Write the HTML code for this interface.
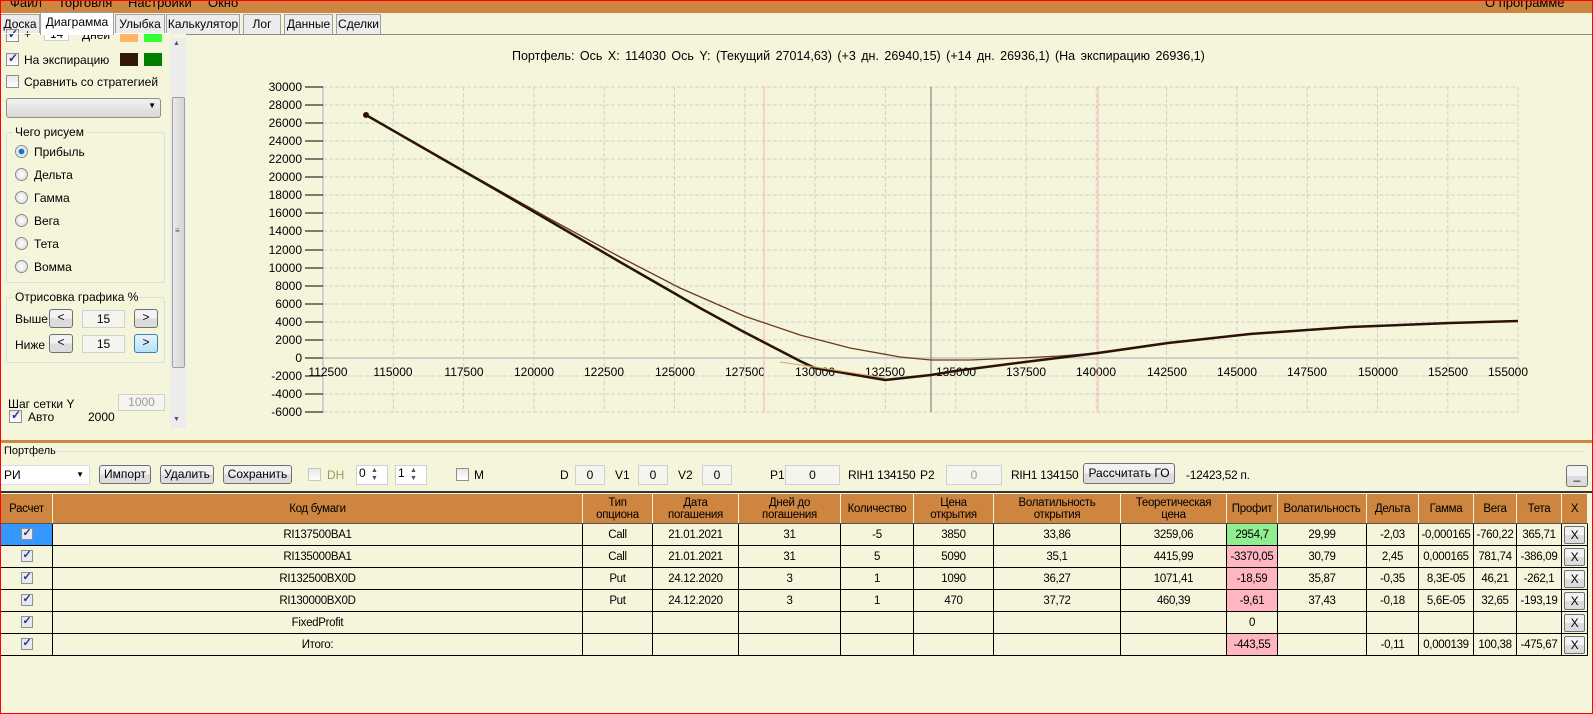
<!DOCTYPE html>
<html><head><meta charset="utf-8">
<style>
*{box-sizing:border-box;margin:0;padding:0}
body{width:1593px;height:714px;overflow:hidden;background:#f5f5dc;font-family:"Liberation Sans",sans-serif;font-size:12px;color:#000;position:relative}
.a{position:absolute;white-space:nowrap}
.menu{left:0;top:0;width:1593px;height:13px;background:#cd853f;overflow:hidden}
.menu span{position:absolute;top:-5px;font-size:13px}
.tab{position:absolute;top:14px;height:20px;background:#ececec;border:1px solid #a0a0a0;border-bottom:none;font-size:12px;line-height:19px;text-align:center}
.cb{position:absolute;width:13px;height:13px;border:1px solid #8e8f8f;background:linear-gradient(#e8e8e8,#fff)}
.cb.c::after{content:"✓";position:absolute;left:1px;top:-3px;font-size:12px;color:#21348c;font-weight:bold}
.rad{position:absolute;width:13px;height:13px;border-radius:50%;border:1px solid #8a8a8a;background:radial-gradient(#fff,#d8d8d8)}
.btn{position:absolute;border:1px solid #707070;border-radius:3px;background:linear-gradient(#f2f2f2 50%,#dcdcdc 50%);text-align:center;font-size:12px}
.box{position:absolute;background:#f5f5f0;border:1px solid #d0d0d0;text-align:center}
.grp{position:absolute;border:1px solid #d5dfe5;border-radius:3px}
.grp span{position:absolute;top:-8px;left:6px;background:#f5f5dc;padding:0 2px}
table{position:absolute;left:0;top:493px;border-collapse:collapse;table-layout:fixed;font-size:11.5px;letter-spacing:-0.3px}
td{border:1px solid #000;height:22px;text-align:center;padding:0;overflow:hidden;white-space:nowrap}
tr.h td{background:#cd853f;height:30px;line-height:12px;border-color:#f5f5dc #f5f5dc #555 #f5f5dc}
.x{display:inline-block;width:21px;height:18px;border:1px solid #707070;border-radius:2px;background:linear-gradient(#f2f2f2 50%,#dcdcdc 50%);line-height:16px;font-size:12px}
.g{background:#90ee90}.p{background:#ffb6c1}
.ck{display:inline-block;width:12px;height:12px;border:1px solid #8e8f8f;background:#e8e8f0;position:relative;vertical-align:middle}
.ck::after{content:"✓";position:absolute;left:1px;top:-3px;font-size:11px;color:#21348c;font-weight:bold}
</style></head><body>
<div class="a menu"><span style="left:10px">Файл</span><span style="left:58px">Торговля</span><span style="left:128px">Настройки</span><span style="left:208px">Окно</span><span style="left:1485px">О программе</span></div>
<div class="a" style="left:0;top:0;width:1593px;height:714px;border:1px solid #f00;pointer-events:none;z-index:9"></div>
<div class="tab" style="left:0;width:40px">Доска</div>
<div class="tab" style="left:40px;width:74px;top:12px;height:23px;background:#fff;z-index:2">Диаграмма</div>
<div class="tab" style="left:115px;width:50px">Улыбка</div>
<div class="tab" style="left:166px;width:74px">Калькулятор</div>
<div class="tab" style="left:243px;width:38px">Лог</div>
<div class="tab" style="left:284px;width:49px">Данные</div>
<div class="tab" style="left:336px;width:45px">Сделки</div>
<div class="a" style="left:186px;top:34px;width:1406px;height:1px;background:#8c8c8c"></div>

<div class="cb c" style="left:6px;top:29px"></div><div class="a" style="left:24px;top:27px">+</div>
<div class="box" style="left:44px;top:27px;width:25px;height:14px;background:#fff;line-height:12px">14</div>
<div class="a" style="left:82px;top:28px">Дней</div>
<div class="a" style="left:120px;top:34px;width:18px;height:8px;background:#ffb366"></div>
<div class="a" style="left:144px;top:34px;width:18px;height:8px;background:#33ff33"></div>
<div class="a" style="left:0;top:33px;width:170px;height:1px;background:#fff"></div>
<div class="cb c" style="left:6px;top:53px"></div><div class="a" style="left:24px;top:53px">На экспирацию</div>
<div class="a" style="left:120px;top:53px;width:18px;height:13px;background:#331a08"></div>
<div class="a" style="left:144px;top:53px;width:18px;height:13px;background:#008000"></div>
<div class="cb" style="left:6px;top:75px"></div><div class="a" style="left:24px;top:75px">Сравнить со стратегией</div>
<div class="a" style="left:6px;top:98px;width:155px;height:20px;border:1px solid #8e8e8e;border-radius:3px;background:linear-gradient(#f2f2f2,#d8d8d8)"><span style="position:absolute;right:4px;top:2px;font-size:8px">▼</span></div>
<div class="grp" style="left:6px;top:132px;width:159px;height:151px"><span>Чего рисуем</span></div>
<div class="rad" style="left:15px;top:145px;background:radial-gradient(#1a6fb5 30%,#cfe4f5 40%,#fff)"></div><div class="a" style="left:34px;top:145px">Прибыль</div>
<div class="rad" style="left:15px;top:168px"></div><div class="a" style="left:34px;top:168px">Дельта</div>
<div class="rad" style="left:15px;top:191px"></div><div class="a" style="left:34px;top:191px">Гамма</div>
<div class="rad" style="left:15px;top:214px"></div><div class="a" style="left:34px;top:214px">Вега</div>
<div class="rad" style="left:15px;top:237px"></div><div class="a" style="left:34px;top:237px">Тета</div>
<div class="rad" style="left:15px;top:260px"></div><div class="a" style="left:34px;top:260px">Вомма</div>
<div class="grp" style="left:6px;top:297px;width:159px;height:66px"><span>Отрисовка графика %</span></div>
<div class="a" style="left:15px;top:312px">Выше</div>
<div class="btn" style="left:49px;top:309px;width:24px;height:19px">&lt;</div>
<div class="box" style="left:82px;top:310px;width:43px;height:18px;line-height:16px">15</div>
<div class="btn" style="left:134px;top:309px;width:24px;height:19px">&gt;</div>
<div class="a" style="left:15px;top:338px">Ниже</div>
<div class="btn" style="left:49px;top:334px;width:24px;height:19px">&lt;</div>
<div class="box" style="left:82px;top:335px;width:43px;height:18px;line-height:16px">15</div>
<div class="btn" style="left:134px;top:334px;width:24px;height:19px;border-color:#3c7fb1;background:linear-gradient(#e5f4fc,#b6e0f7)">&gt;</div>
<div class="a" style="left:8px;top:397px">Шаг сетки Y</div>
<div class="box" style="left:118px;top:394px;width:47px;height:17px;color:#999;line-height:15px">1000</div>
<div class="cb c" style="left:9px;top:410px"></div><div class="a" style="left:28px;top:410px">Авто</div>
<div class="a" style="left:88px;top:410px">2000</div>
<div class="a" style="left:170px;top:38px;width:16px;height:390px;background:#ececec"></div>
<div class="a" style="left:173px;top:40px;font-size:7px;color:#555">▲</div>
<div class="a" style="left:172px;top:97px;width:13px;height:271px;border:1px solid #a0a0a0;border-radius:2px;background:linear-gradient(90deg,#e8e8e8,#d6d6d6)"></div>
<div class="a" style="left:175px;top:226px;font-size:8px;color:#555">≡</div>
<div class="a" style="left:173px;top:416px;font-size:7px;color:#555">▼</div>

<div class="a" style="left:512px;top:49px;font-size:12.5px;word-spacing:2px">Портфель: Ось X: 114030 Ось Y:  (Текущий 27014,63)  (+3 дн. 26940,15)  (+14 дн. 26936,1)  (На экспирацию 26936,1)</div>

<svg class="a" style="left:0;top:0" width="1593" height="440" font-family="Liberation Sans" font-size="12">
<g stroke="#cfcfcf" stroke-dasharray="4,2" stroke-width="1">
<path d="M393.3 87V412M463.6 87V412M533.9 87V412M604.2 87V412M674.5 87V412M744.8 87V412M815.1 87V412M885.4 87V412M955.7 87V412M1026 87V412M1096.3 87V412M1166.6 87V412M1236.9 87V412M1307.2 87V412M1377.5 87V412M1447.8 87V412M1518 87V412"/>
<path d="M323 87H1518M323 105H1518M323 123H1518M323 141H1518M323 159H1518M323 177H1518M323 195H1518M323 213H1518M323 231H1518M323 250H1518M323 268H1518M323 286H1518M323 304H1518M323 322H1518M323 340H1518M323 376H1518M323 394H1518M323 412H1518"/>
</g>
<path d="M323 87V412M323 358H1518" stroke="#d0d0d0" stroke-width="2"/>
<g stroke="#000"><path d="M305 87H323M305 105H323M305 123H323M305 141H323M305 159H323M305 177H323M305 195H323M305 213H323M305 231H323M305 250H323M305 268H323M305 286H323M305 304H323M305 322H323M305 340H323M305 358H323M305 376H323M305 394H323M305 412H323"/></g>
<g text-anchor="end">
<text x="302" y="91">30000</text><text x="302" y="109">28000</text><text x="302" y="127">26000</text><text x="302" y="145">24000</text><text x="302" y="163">22000</text><text x="302" y="181">20000</text><text x="302" y="199">18000</text><text x="302" y="217">16000</text><text x="302" y="235">14000</text><text x="302" y="254">12000</text><text x="302" y="272">10000</text><text x="302" y="290">8000</text><text x="302" y="308">6000</text><text x="302" y="326">4000</text><text x="302" y="344">2000</text><text x="302" y="362">0</text><text x="302" y="380">-2000</text><text x="302" y="398">-4000</text><text x="302" y="416">-6000</text>
</g>
<g text-anchor="middle">
<text x="328" y="376">112500</text><text x="393" y="376">115000</text><text x="464" y="376">117500</text><text x="534" y="376">120000</text><text x="604" y="376">122500</text><text x="675" y="376">125000</text><text x="745" y="376">127500</text><text x="815" y="376">130000</text><text x="885" y="376">132500</text><text x="956" y="376">135000</text><text x="1026" y="376">137500</text><text x="1096" y="376">140000</text><text x="1167" y="376">142500</text><text x="1237" y="376">145000</text><text x="1307" y="376">147500</text><text x="1378" y="376">150000</text><text x="1448" y="376">152500</text><text x="1508" y="376">155000</text>
</g>
<path d="M764 87V412M1098 87V412" stroke="#ffb0b8" stroke-width="1"/>
<path d="M931 87V412" stroke="#707070" stroke-width="1"/>
<path d="M366 115L450 163L550 219L620 257L680 288L744 316L800 335L850 348L900 357L931 360L970 360L1020 358L1060 356L1098 353" fill="none" stroke="#6b3a1f" stroke-width="1.3"/>
<path d="M366 115L500 192L620 262L700 308L744 332L800 361L815 368L885 380L931 375L955 371L1025 362L1098 353L1168 343L1250 334L1350 327L1450 323L1518 321" fill="none" stroke="#2a1408" stroke-width="2.5"/>
<path d="M780 362L815 367L885 378" fill="none" stroke="#d9a06a" stroke-width="1"/>
<circle cx="366" cy="115" r="3" fill="#2a1408"/>
</svg>

<div class="a" style="left:0;top:440px;width:1593px;height:3px;background:#cd853f"></div>
<div class="a" style="left:4px;top:445px;font-size:11px">Портфель</div>
<div class="a" style="left:55px;top:451px;width:1530px;height:1px;background:#e0e0e0"></div>
<div class="a" style="left:0;top:465px;width:90px;height:20px;background:#fff;border:1px solid #ddd;padding:2px 3px">РИ<span style="position:absolute;right:5px;top:4px;font-size:8px">▼</span></div>
<div class="btn" style="left:99px;top:465px;width:52px;height:19px;line-height:17px">Импорт</div>
<div class="btn" style="left:160px;top:465px;width:54px;height:19px;line-height:17px">Удалить</div>
<div class="btn" style="left:223px;top:465px;width:69px;height:19px;line-height:17px">Сохранить</div>
<div class="cb" style="left:308px;top:468px;border-color:#c8c8c8"></div><div class="a" style="left:327px;top:468px;color:#9a9a5a">DH</div>
<div class="box" style="left:356px;top:465px;width:32px;height:20px;background:#fff;text-align:left;padding-left:2px">0</div>
<div class="box" style="left:395px;top:465px;width:32px;height:20px;background:#fff;text-align:left;padding-left:2px">1</div>
<div class="a" style="left:371px;top:467px;font-size:7px;color:#456;line-height:8px">▲<br>▼</div>
<div class="a" style="left:410px;top:467px;font-size:7px;color:#456;line-height:8px">▲<br>▼</div>
<div class="cb" style="left:456px;top:468px"></div><div class="a" style="left:474px;top:468px">M</div>
<div class="a" style="left:560px;top:468px">D</div><div class="box" style="left:575px;top:465px;width:30px;height:20px;line-height:18px">0</div>
<div class="a" style="left:615px;top:468px">V1</div><div class="box" style="left:638px;top:465px;width:30px;height:20px;line-height:18px">0</div>
<div class="a" style="left:678px;top:468px">V2</div><div class="box" style="left:702px;top:465px;width:30px;height:20px;line-height:18px">0</div>
<div class="a" style="left:770px;top:468px">P1</div><div class="box" style="left:785px;top:465px;width:55px;height:20px;line-height:18px">0</div>
<div class="a" style="left:848px;top:468px;letter-spacing:-0.3px">RIH1 134150</div>
<div class="a" style="left:920px;top:468px">P2</div><div class="box" style="left:946px;top:465px;width:56px;height:20px;line-height:18px;color:#999">0</div>
<div class="a" style="left:1011px;top:468px;letter-spacing:-0.3px">RIH1 134150</div>
<div class="btn" style="left:1083px;top:463px;width:92px;height:21px;line-height:18px">Рассчитать ГО</div>
<div class="a" style="left:1186px;top:468px;letter-spacing:-0.3px">-12423,52 п.</div>
<div class="btn" style="left:1566px;top:465px;width:22px;height:22px;line-height:18px">_</div>
<div class="a" style="left:0;top:491px;width:1593px;height:2px;background:#333"></div>

<table>
<colgroup><col style="width:52px"><col style="width:530px"><col style="width:70px"><col style="width:86px"><col style="width:102px"><col style="width:73px"><col style="width:80px"><col style="width:127px"><col style="width:106px"><col style="width:51px"><col style="width:89px"><col style="width:52px"><col style="width:55px"><col style="width:43px"><col style="width:45px"><col style="width:26px"></colgroup>
<tr class="h"><td>Расчет</td><td>Код бумаги</td><td>Тип<br>опциона</td><td>Дата<br>погашения</td><td>Дней до<br>погашения</td><td>Количество</td><td>Цена<br>открытия</td><td>Волатильность<br>открытия</td><td>Теоретическая<br>цена</td><td>Профит</td><td>Волатильность</td><td>Дельта</td><td>Гамма</td><td>Вега</td><td>Тета</td><td>X</td></tr>
<tr><td style="background:#3399ff"><span class="ck"></span></td><td>RI137500BA1</td><td>Call</td><td>21.01.2021</td><td>31</td><td>-5</td><td>3850</td><td>33,86</td><td>3259,06</td><td class="g">2954,7</td><td>29,99</td><td>-2,03</td><td>-0,000165</td><td>-760,22</td><td>365,71</td><td><span class="x">X</span></td></tr>
<tr><td><span class="ck"></span></td><td>RI135000BA1</td><td>Call</td><td>21.01.2021</td><td>31</td><td>5</td><td>5090</td><td>35,1</td><td>4415,99</td><td class="p">-3370,05</td><td>30,79</td><td>2,45</td><td>0,000165</td><td>781,74</td><td>-386,09</td><td><span class="x">X</span></td></tr>
<tr><td><span class="ck"></span></td><td>RI132500BX0D</td><td>Put</td><td>24.12.2020</td><td>3</td><td>1</td><td>1090</td><td>36,27</td><td>1071,41</td><td class="p">-18,59</td><td>35,87</td><td>-0,35</td><td>8,3E-05</td><td>46,21</td><td>-262,1</td><td><span class="x">X</span></td></tr>
<tr><td><span class="ck"></span></td><td>RI130000BX0D</td><td>Put</td><td>24.12.2020</td><td>3</td><td>1</td><td>470</td><td>37,72</td><td>460,39</td><td class="p">-9,61</td><td>37,43</td><td>-0,18</td><td>5,6E-05</td><td>32,65</td><td>-193,19</td><td><span class="x">X</span></td></tr>
<tr><td><span class="ck"></span></td><td>FixedProfit</td><td></td><td></td><td></td><td></td><td></td><td></td><td></td><td>0</td><td></td><td></td><td></td><td></td><td></td><td><span class="x">X</span></td></tr>
<tr><td><span class="ck"></span></td><td>Итого:</td><td></td><td></td><td></td><td></td><td></td><td></td><td></td><td class="p">-443,55</td><td></td><td>-0,11</td><td>0,000139</td><td>100,38</td><td>-475,67</td><td><span class="x">X</span></td></tr>
</table>
</body></html>
